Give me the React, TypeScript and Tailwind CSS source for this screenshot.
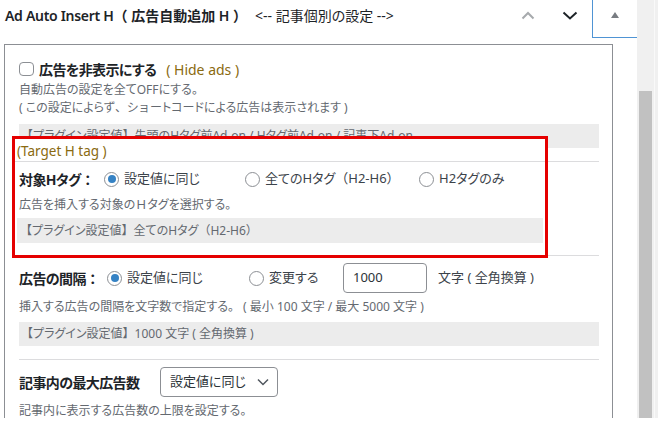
import React from "react";

function N({ c }: { c: string }) {
  return <span className="[font-feature-settings:normal]">{c}</span>;
}

function Radio({ checked }: { checked?: boolean }) {
  return (
    <span className="w-[15px] h-[15px] rounded-full border border-[#8c8f94] bg-white flex items-center justify-center shrink-0">
      {checked && <span className="w-[8px] h-[8px] rounded-full bg-[#3582c4]" />}
    </span>
  );
}

function RadioOpt({ checked, children, w }: { checked?: boolean; children: React.ReactNode; w: string }) {
  return (
    <div className={`flex items-center gap-[5px] ${w}`}>
      <Radio checked={checked} />
      <span className="text-[13px] text-[#3c434a] whitespace-nowrap">{children}</span>
    </div>
  );
}

function Header() {
  return (
    <div className="h-[38px] flex items-start">
      <div className="h-[31px] pl-[5px] whitespace-nowrap flex items-center">
        <span className="text-[14px] font-semibold text-[#1d2327]">
          <span className="tracking-[-0.3px]">Ad Auto Insert H</span>
          <N c="（" /> 広告自動追加 H <N c="）" />
        </span>
        <span className="text-[14px] text-[#1d2327] ml-[8px]">&lt;-- 記事個別の設定 --&gt;</span>
      </div>
      <div className="ml-auto flex items-start h-full">
        <div className="w-[40px] h-[31px] flex items-center justify-center">
          <svg width="14" height="9" viewBox="0 0 14 9">
            <path d="M1.5 7.5 L7 2 L12.5 7.5" fill="none" stroke="#a7aaad" strokeWidth="2" />
          </svg>
        </div>
        <div className="w-[44px] h-[31px] flex items-center justify-center">
          <svg width="16" height="9" viewBox="0 0 16 9">
            <path d="M1.5 1.5 L8 7.5 L14.5 1.5" fill="none" stroke="#1d2327" strokeWidth="2" />
          </svg>
        </div>
        <div className="w-[45px] h-full border-l border-b border-[#4f94d4]">
          <div className="h-[30px] flex items-center justify-center">
            <svg width="8" height="6" viewBox="0 0 8 6">
              <polygon points="4,0 8,6 0,6" fill="#787c82" />
            </svg>
          </div>
        </div>
      </div>
    </div>
  );
}

function Separator() {
  return <div className="h-px bg-[#dcdcde]" />;
}

function Panel() {
  return (
    <div className="relative mt-[6px] ml-[4px] w-[609px] flex-1 border-l border-t border-r border-[#8c8f94] pl-[14px] pr-[13px] overflow-hidden">
      {/* Section 1 */}
      <div className="pt-[14px]">
        <div className="h-[20px] flex items-center whitespace-nowrap">
          <span className="w-[15px] h-[14px] rounded-[4px] border border-[#8c8f94] bg-white" />
          <span className="ml-[5px] text-[14px] tracking-[-0.6px] font-bold text-[#1d2327]">広告を非表示にする</span>
          <span className="ml-[10px] text-[14px] text-[#8a6a10]">( Hide ads )</span>
        </div>
        <div className="mt-[2px] text-[12px] leading-[18px] text-[#646970] whitespace-nowrap">
          <div>自動広告の設定を全てOFFにする。</div>
          <div>
            ( この設定によらず<N c="、" />シ<N c="ョ" />ートコードによる広告は表示されます )
          </div>
        </div>
        <div className="mt-[7px] h-[24px] bg-[#ececec] flex items-center pl-[2px] text-[12px] text-[#646970] whitespace-nowrap">
          <N c="【" />プラグイン設定値<N c="】" /> 先頭のHタグ前Ad-on / Hタグ前Ad-on / 記事下Ad-on
        </div>
      </div>
      <div className="mt-[13px]">
        <Separator />
      </div>
      {/* Section 2 (covered by highlight) */}
      <div className="h-[93px]" />
      <Separator />
      {/* Section 3 */}
      <div className="mt-[7px] h-[30px] flex items-center whitespace-nowrap">
        <span className="w-[88px] text-[14px] tracking-[-0.6px] font-bold text-[#1d2327]">
          広告の間隔<N c="：" />
        </span>
        <RadioOpt checked w="w-[142px]">設定値に同じ</RadioOpt>
        <RadioOpt w="w-[94px]">変更する</RadioOpt>
        <div className="w-[84px] h-[30px] rounded-[4px] border border-[#8c8f94] flex items-center pl-[9px] text-[13px] text-[#2c3338]">
          1000
        </div>
        <span className="ml-[11px] text-[13px] text-[#3c434a]">文字 ( 全角換算 )</span>
      </div>
      <div className="mt-[5px] text-[12px] leading-[18px] text-[#646970] whitespace-nowrap">
        挿入する広告の間隔を文字数で指定する<N c="。" /> ( 最小 100 文字 / 最大 5000 文字 )
      </div>
      <div className="mt-[6px] h-[24px] bg-[#ececec] flex items-center pl-[2px] text-[12px] text-[#646970] whitespace-nowrap">
        <N c="【" />プラグイン設定値<N c="】" /> 1000 文字 ( 全角換算 )
      </div>
      <div className="mt-[13px]">
        <Separator />
      </div>
      {/* Section 4 */}
      <div className="mt-[7px] h-[30px] flex items-center whitespace-nowrap">
        <span className="w-[141px] text-[14px] tracking-[-0.6px] font-bold text-[#1d2327]">記事内の最大広告数</span>
        <div className="w-[118px] h-[30px] rounded-[4px] border border-[#8c8f94] flex items-center pl-[9px] pr-[8px] text-[13px] text-[#2c3338]">
          <span>設定値に同じ</span>
          <svg className="ml-auto" width="12" height="8" viewBox="0 0 12 8">
            <path d="M1 1.5 L6 6.5 L11 1.5" fill="none" stroke="#50575e" strokeWidth="1.5" />
          </svg>
        </div>
      </div>
      <div className="mt-[5px] text-[12px] leading-[18px] text-[#646970] whitespace-nowrap">
        記事内に表示する広告数の上限を設定する。
      </div>

      {/* Highlight overlay */}
      <div className="absolute left-[7px] top-[91px] w-[536px] h-[122px] border-[3px] border-[#e50000] bg-white flex flex-col">
        <div className="h-[22px] flex items-end pl-[2px] pb-[2px]">
          <span className="text-[13.5px] leading-[16px] text-[#8a6a10] whitespace-nowrap">(Target H tag )</span>
        </div>
        <Separator />
        <div className="mt-[7px] h-[20px] pl-[4px] flex items-center whitespace-nowrap">
          <span className="w-[85px] text-[14px] tracking-[-0.6px] font-bold text-[#1d2327]">
            対象Hタグ<N c="：" />
          </span>
          <RadioOpt checked w="w-[141px]">設定値に同じ</RadioOpt>
          <RadioOpt w="w-[174px]">
            全てのHタグ<N c="（" />H2-H6<N c="）" />
          </RadioOpt>
          <RadioOpt w="">H2タグのみ</RadioOpt>
        </div>
        <div className="mt-[7px] pl-[4px] text-[12px] leading-[18px] text-[#646970] whitespace-nowrap">
          広告を挿入する対象の<N c="Ｈ" />タグを選択する<N c="。" />
        </div>
        <div className="mt-[4px] mx-[2px] h-[25px] bg-[#ececec] flex items-center pl-[3px] text-[12px] text-[#646970] whitespace-nowrap">
          <N c="【" />プラグイン設定値<N c="】" /> 全てのHタグ<N c="（" />H2-H6<N c="）" />
        </div>
      </div>
    </div>
  );
}

function Scrollbar() {
  return (
    <div className="w-[21px] flex bg-[#f0f0f0]">
      <div className="w-[17px] flex flex-col">
        <div className="mt-[91px] ml-[2px] w-[13px] flex-1 bg-[#c1c1c1]" />
      </div>
      <div className="w-px bg-[#f9f9f9]" />
    </div>
  );
}

export default function App() {
  return (
    <div className="w-[658px] h-[421px] bg-white overflow-hidden font-['Noto_Sans','Noto_Sans_CJK_JP',sans-serif] [font-feature-settings:'palt']">
      <div className="flex h-[418px]">
        <div className="w-[637px] flex flex-col">
          <Header />
          <Panel />
        </div>
        <Scrollbar />
      </div>
    </div>
  );
}
